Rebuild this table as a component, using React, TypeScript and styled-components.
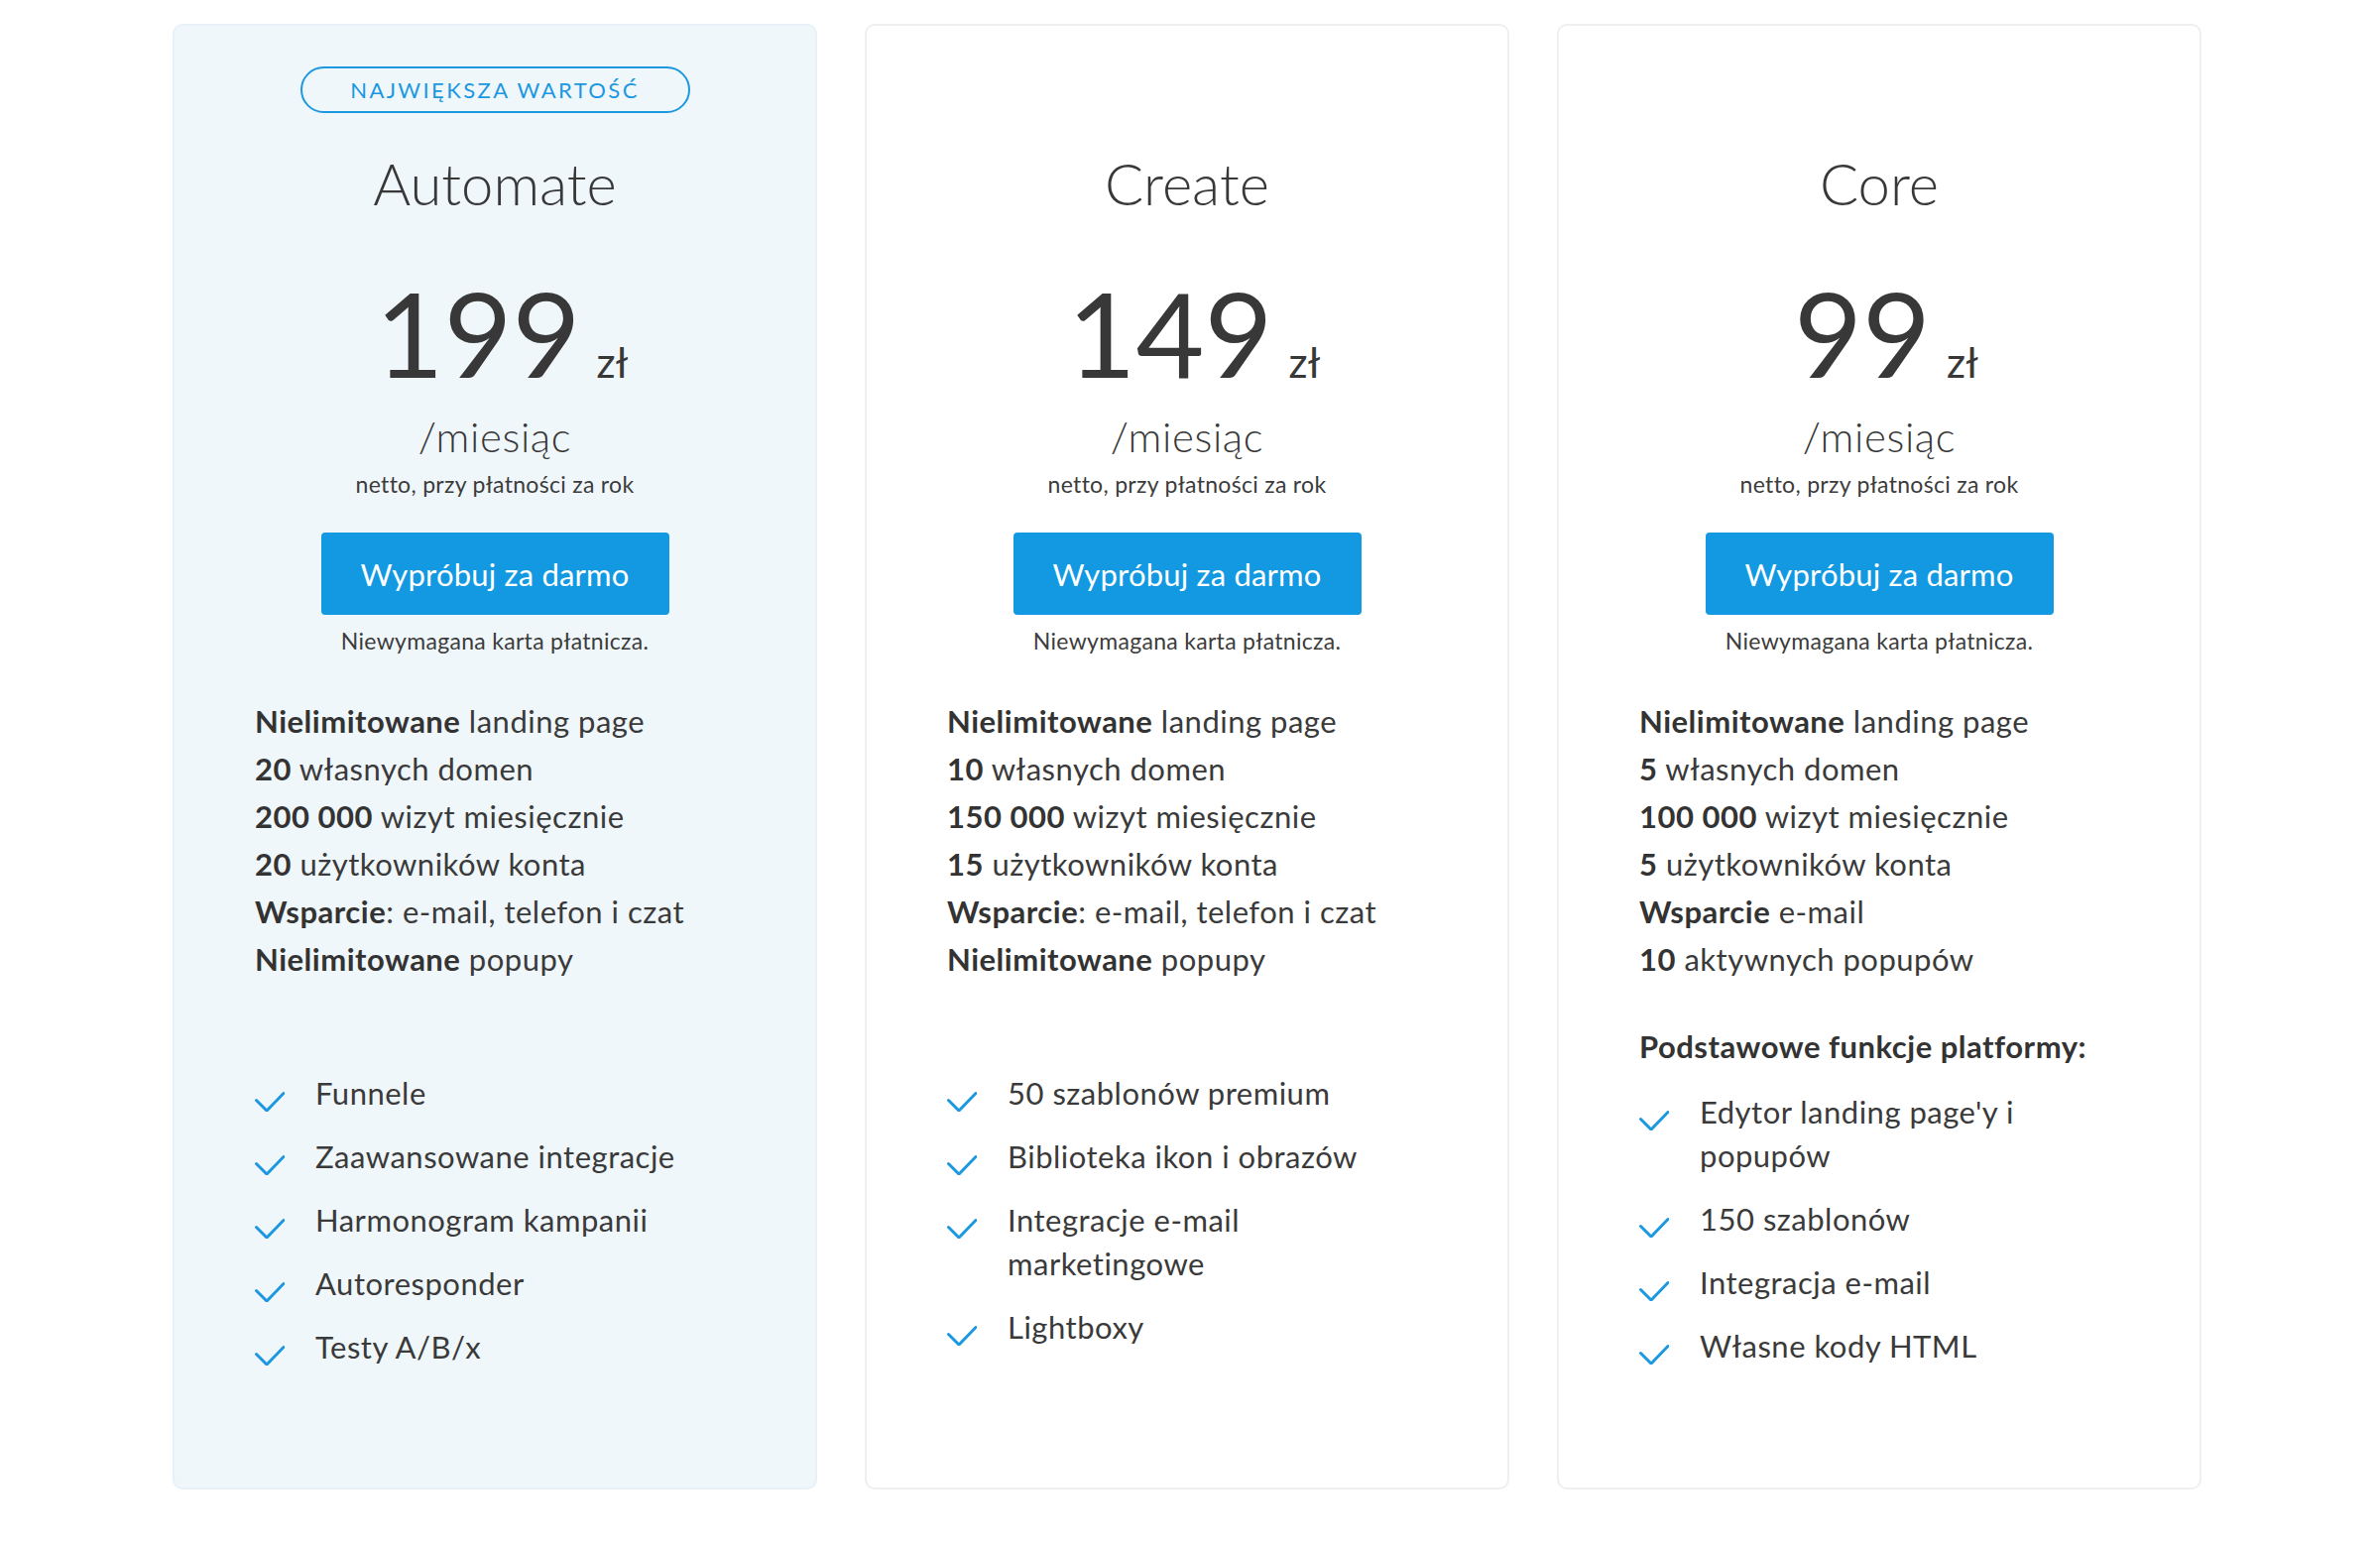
import React from "react";
import styled, { createGlobalStyle } from "styled-components";

const GlobalStyle = createGlobalStyle`
  html, body { margin: 0; padding: 0; background: #ffffff; }
  body { font-family: Lato, "Noto Sans", "Liberation Sans", sans-serif; color: #383838; }
  * { box-sizing: border-box; }
`;

const Page = styled.div`
  width: 2400px;
  min-height: 1560px;
  padding: 24px 0 0 174px;
`;

const Row = styled.div`
  display: grid;
  grid-template-columns: repeat(3, 650px);
  column-gap: 48px;
  align-items: stretch;
`;

const Card = styled.div<{ $featured?: boolean }>`
  height: 1478px;
  border-radius: 10px;
  border: 2px solid ${(p) => (p.$featured ? "#e8f1f7" : "#efefef")};
  background: ${(p) => (p.$featured ? "#f0f7fb" : "#ffffff")};
  display: flex;
  flex-direction: column;
  padding-top: 41px;
`;

const Head = styled.div`
  display: flex;
  flex-direction: column;
  align-items: center;
`;

const BadgeSlot = styled.div`
  height: 47px;
  display: flex;
  justify-content: center;
`;

const Badge = styled.div`
  width: 393px;
  height: 47px;
  border: 2px solid #1b98e0;
  border-radius: 24px;
  color: #1b98e0;
  font-size: 22px;
  letter-spacing: 2.4px;
  display: flex;
  align-items: center;
  justify-content: center;
  text-transform: uppercase;
`;

const Title = styled.h2`
  margin: 35px 0 0;
  font-size: 58px;
  line-height: 72px;
  font-weight: 300;
  color: #383838;
`;

const PriceRow = styled.div`
  margin-top: 52px;
  display: flex;
  align-items: baseline;
  padding-left: 14px;
`;

const Amount = styled.span`
  font-size: 119px;
  line-height: 124px;
  font-weight: 400;
  color: #383838;
`;

const Currency = styled.span`
  font-size: 42px;
  margin-left: 16px;
  font-weight: 400;
`;

const Period = styled.div`
  margin-top: 19px;
  font-size: 42px;
  line-height: 48px;
  font-weight: 300;
  letter-spacing: 0.6px;
`;

const Note = styled.div<{ $gap: number }>`
  margin-top: ${(p) => p.$gap}px;
  font-size: 23px;
  line-height: 28px;
  letter-spacing: 0.3px;
  color: #3c3c3c;
`;

const CtaButton = styled.button`
  margin-top: 35px;
  width: 351px;
  height: 83px;
  border: none;
  border-radius: 4px;
  background: #1299e1;
  color: #ffffff;
  font-family: Lato, "Noto Sans", sans-serif;
  font-size: 31px;
  letter-spacing: 0.2px;
  cursor: pointer;
`;

const Body = styled.div`
  padding-left: 81px;
  padding-right: 30px;
`;

const Limits = styled.ul`
  list-style: none;
  margin: 43px 0 0;
  padding: 0;
`;

const Limit = styled.li`
  font-size: 31px;
  line-height: 48px;
  letter-spacing: 0.5px;
  color: #3a3a3a;
  b { font-weight: 700; color: #333; }
`;

const SectionTitle = styled.div`
  margin-top: 42px;
  font-size: 31px;
  line-height: 44px;
  letter-spacing: 0.5px;
  font-weight: 700;
  color: #333;
`;

const Checks = styled.ul<{ $gap: number }>`
  list-style: none;
  margin: ${(p) => p.$gap}px 0 0;
  padding: 0;
  display: flex;
  flex-direction: column;
  gap: 20px;
`;

const CheckItem = styled.li`
  display: flex;
  align-items: flex-start;
  gap: 31px;
  font-size: 31px;
  line-height: 44px;
  letter-spacing: 0.5px;
  color: #3a3a3a;
`;

const CheckText = styled.span`
  max-width: 400px;
`;

const CheckIcon = styled.svg`
  flex: 0 0 30px;
  width: 30px;
  height: 20px;
  margin-top: 21px;
`;

const Check = () => (
  <CheckIcon viewBox="0 0 30 20" fill="none">
    <polyline points="1.5,8.5 12,19 29,1.5" stroke="#1b98e0" strokeWidth="3" strokeLinecap="round" strokeLinejoin="round" fill="none" />
  </CheckIcon>
);

type Plan = {
  name: string;
  price: string;
  featured?: boolean;
  limits: [string, string][];
  heading?: string;
  checks: string[];
};

const plans: Plan[] = [
  {
    name: "Automate",
    price: "199",
    featured: true,
    limits: [
      ["Nielimitowane", " landing page"],
      ["20", " własnych domen"],
      ["200 000", " wizyt miesięcznie"],
      ["20", " użytkowników konta"],
      ["Wsparcie", ": e-mail, telefon i czat"],
      ["Nielimitowane", " popupy"],
    ],
    checks: ["Funnele", "Zaawansowane integracje", "Harmonogram kampanii", "Autoresponder", "Testy A/B/x"],
  },
  {
    name: "Create",
    price: "149",
    limits: [
      ["Nielimitowane", " landing page"],
      ["10", " własnych domen"],
      ["150 000", " wizyt miesięcznie"],
      ["15", " użytkowników konta"],
      ["Wsparcie", ": e-mail, telefon i czat"],
      ["Nielimitowane", " popupy"],
    ],
    checks: ["50 szablonów premium", "Biblioteka ikon i obrazów", "Integracje e-mail marketingowe", "Lightboxy"],
  },
  {
    name: "Core",
    price: "99",
    limits: [
      ["Nielimitowane", " landing page"],
      ["5", " własnych domen"],
      ["100 000", " wizyt miesięcznie"],
      ["5", " użytkowników konta"],
      ["Wsparcie", " e-mail"],
      ["10", " aktywnych popupów"],
    ],
    heading: "Podstawowe funkcje platformy:",
    checks: ["Edytor landing page'y i popupów", "150 szablonów", "Integracja e-mail", "Własne kody HTML"],
  },
];

const PlanCard = ({ plan }: { plan: Plan }) => (
  <Card $featured={plan.featured}>
    <Head>
      <BadgeSlot>{plan.featured && <Badge>Największa wartość</Badge>}</BadgeSlot>
      <Title>{plan.name}</Title>
      <PriceRow>
        <Amount>{plan.price}</Amount>
        <Currency>zł</Currency>
      </PriceRow>
      <Period>/miesiąc</Period>
      <Note $gap={10}>netto, przy płatności za rok</Note>
      <CtaButton>Wypróbuj za darmo</CtaButton>
      <Note $gap={12}>Niewymagana karta płatnicza.</Note>
    </Head>
    <Body>
      <Limits>
        {plan.limits.map(([b, rest], i) => (
          <Limit key={i}>
            <b>{b}</b>
            {rest}
          </Limit>
        ))}
      </Limits>
      {plan.heading && <SectionTitle>{plan.heading}</SectionTitle>}
      <Checks $gap={plan.heading ? 22 : 89}>
        {plan.checks.map((c) => (
          <CheckItem key={c}>
            <Check />
            <CheckText>{c}</CheckText>
          </CheckItem>
        ))}
      </Checks>
    </Body>
  </Card>
);

export default function App() {
  return (
    <>
      <GlobalStyle />
      <Page>
        <Row>
          {plans.map((p) => (
            <PlanCard key={p.name} plan={p} />
          ))}
        </Row>
      </Page>
    </>
  );
}
